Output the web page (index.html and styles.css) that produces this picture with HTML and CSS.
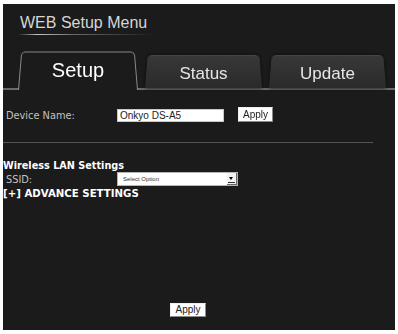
FILE: index.html
```html
<!DOCTYPE html>
<html lang="en">
<head>
    <meta charset="UTF-8">
    <meta name="viewport" content="width=device-width, initial-scale=1.0">
    <title>WEB Setup Menu</title>
    <link rel="stylesheet" href="styles.css">
</head>
<body>
    <div id="container">
        <div class="header">
            <h1>WEB Setup Menu</h1>
            <div class="glow"></div>
        </div>
        <div class="tabs">
            <div class="tab active">Setup</div>
            <div class="tab">Status</div>
            <div class="tab">Update</div>
        </div>
        <div class="form">
            <div class="row">
                <span class="label">Device Name:</span>
                <input class="text" type="text" value="Onkyo DS-A5">
                <button class="btn apply-name">Apply</button>
            </div>
            <hr>
            <div class="heading">Wireless LAN Settings</div>
            <div class="row ssid">
                <span class="label">SSID:</span>
                <span class="select-wrap">
                    <select class="select">
                        <option>Select Option</option>
                    </select>
                    <span class="arrow"></span>
                </span>
            </div>
            <div class="heading advance">[+] ADVANCE SETTINGS</div>
            <div class="footer">
                <button class="btn">Apply</button>
            </div>
        </div>
    </div>
</body>
</html>
```

FILE: styles.css
```css
* {
    box-sizing: border-box;
}
body {
    margin: 0;
    background: #fff;
}
#container {
    margin: 4px 3px;
    width: 392px;
    height: 326px;
    overflow: hidden;
    background: #1b1b1b;
    font-family: "DejaVu Sans", Verdana, sans-serif;
}
.header {
    padding: 10px 0 0 17px;
}
.header h1 {
    margin: 0;
    font-family: "Liberation Sans", Arial, sans-serif;
    font-size: 16px;
    line-height: 18px;
    font-weight: normal;
    color: #d6d6d6;
}
.glow {/*タイトル下の光るライン*/
    margin: 2px 0 0 -2px;
    width: 138px;
    height: 1px;
    background: linear-gradient(to right, rgba(255,255,255,0), rgba(255,255,255,0.75) 14%, rgba(255,255,255,0.35) 40%, rgba(255,255,255,0));
}
.tabs {
    display: flex;
    align-items: flex-end;
    gap: 7px;
    margin-top: 17px;
    padding-left: 15px;
    height: 38px;
    border-bottom: 2px solid #6a6a6a;
}
.tab {
    position: relative;
    isolation: isolate;
    width: 117px;
    height: 32px;
    padding-top: 9px;
    text-align: center;
    font-family: "Liberation Sans", Arial, sans-serif;
    font-size: 17px;
    line-height: 17px;
    color: #e6e6e6;
}
.tab::before {/*台形のタブ*/
    content: "";
    position: absolute;
    top: -3px;
    left: 0;
    right: 0;
    bottom: 0;
    z-index: -1;
    border-radius: 5px 5px 0 0;
    border-top: 1px solid #474747;
    background: linear-gradient(#383838, #2a2a2a);
    box-shadow: 0 0 4px #0a0a0a;
    transform: perspective(100px) rotateX(8deg);
    transform-origin: bottom;
}
.tab.active {
    width: 120px;
    height: 38px;
    margin-bottom: -2px;
    padding-top: 8px;
    font-size: 20px;
    line-height: 20px;
    color: #fff;
}
.tab.active::before {
    border: 1px solid #8a8a8a;
    border-bottom: none;
    background: #1b1b1b;
    box-shadow: none;
}
.form {
    width: 370px;
    margin-top: 17px;
}
.row {
    display: flex;
    align-items: center;
    height: 17px;
}
.label {
    width: 114px;
    padding-left: 3px;
    font-size: 9.8px;
    color: #c2c2c2;
}
.text {
    width: 107px;
    height: 13px;
    margin: 0;
    padding: 0 2px;
    border: 1px solid #c8c8c8;
    background: #fff;
    font-family: "Liberation Sans", Arial, sans-serif;
    font-size: 10px;
    color: #222;
}
.btn {
    height: 15px;
    margin: 0;
    padding: 0 4px;
    border: 1px solid #8a8a8a;
    border-top-color: #eee;
    border-left-color: #eee;
    background: #fff;
    font-family: "Liberation Sans", Arial, sans-serif;
    font-size: 10px;
    line-height: 12px;
    color: #222;
}
.apply-name {
    margin-left: 14px;
    position: relative;
    top: -1px;
}
hr {
    margin: 18px 0 0;
    border: none;
    height: 1px;
    background: #555;
}
.heading {
    margin-top: 17px;
    font-size: 9.7px;
    line-height: 12px;
    font-weight: bold;
    color: #fff;
}
.ssid {
    height: 14px;
}
.select-wrap {
    position: relative;
    display: block;
    width: 121px;
    height: 14px;
}
.select {
    appearance: none;
    display: block;
    width: 100%;
    height: 100%;
    margin: 0;
    padding: 0 0 0 5px;
    border: 1px solid #b5b5b5;
    border-radius: 0;
    background: #fff;
    font-family: "Liberation Sans", Arial, sans-serif;
    font-size: 6px;
    color: #333;
}
.arrow {/*ドロップダウンの矢印ボタン*/
    position: absolute;
    top: 1px;
    right: 1px;
    width: 10px;
    height: 12px;
    border-right: 1px solid #666;
    border-bottom: 1px solid #666;
    background: #f2f2f2;
}
.arrow::before {
    content: "";
    position: absolute;
    left: 2px;
    top: 4px;
    border-left: 2.5px solid transparent;
    border-right: 2.5px solid transparent;
    border-top: 3px solid #000;
}
.arrow::after {
    content: "";
    position: absolute;
    left: 1px;
    right: 1px;
    bottom: 1px;
    height: 1px;
    background: #333;
}
.advance {
    margin-top: 2px;
    font-size: 10.2px;
}
.footer {
    margin-top: 98px;
    text-align: center;
}
.footer .btn {
    height: 14px;
}
```
